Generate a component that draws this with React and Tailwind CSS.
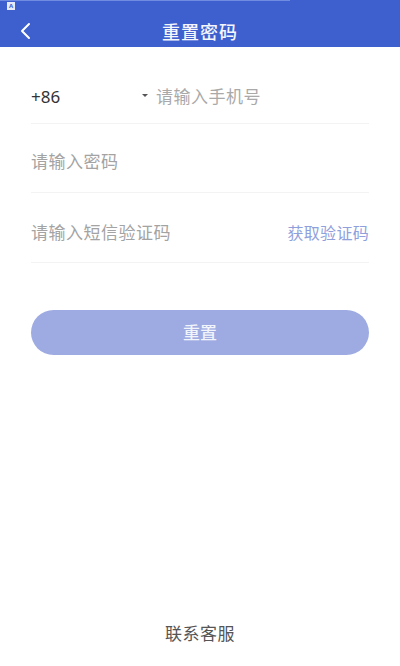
import React from "react";

export default function App() {
  const font = { fontFamily: '"Noto Sans", "Noto Sans CJK SC", sans-serif' };
  return (
    <div className="w-[400px] h-[666px] bg-white flex flex-col relative overflow-hidden" style={font}>
      <div className="h-[47px] bg-[#3e60cf] relative flex items-center justify-center shrink-0">
        <div className="absolute left-0 top-0 w-[290px] h-[1px] bg-[#6f8ce0]" />
        <div className="absolute left-[7px] top-[2px] w-[8px] h-[8px] bg-[#e8ecf8] flex items-center justify-center">
          <span className="text-[6px] leading-none text-[#3e60cf] font-bold">A</span>
        </div>
        <div className="absolute left-[18px] top-[22px]">
          <svg width="16" height="18" viewBox="0 0 16 18" fill="none">
            <path d="M11 2 L4 9 L11 16" stroke="#ffffff" strokeWidth="2" strokeLinecap="round" strokeLinejoin="round" />
          </svg>
        </div>
        <span className="text-[18px] text-[#f4f6fc] font-medium tracking-[1px] mt-[16px] leading-none">重置密码</span>
      </div>

      <div className="px-[31px] flex flex-col mt-[23px]">
        <div className="h-[54px] flex items-center border-b border-[#f3f3f3]">
          <span className="text-[17px] text-[#333] w-[110px]">+86</span>
          <svg width="8" height="6" viewBox="0 0 8 6" className="mr-[7px] mt-[-2px]">
            <path d="M1 1 L7 1 L4 4 Z" fill="#555" />
          </svg>
          <span className="text-[17px] tracking-[0.5px] text-[#a9a9a9]">请输入手机号</span>
        </div>
        <div className="h-[69px] flex items-center border-b border-[#f3f3f3] pt-[8px]">
          <span className="text-[17px] tracking-[0.5px] text-[#a3a3a3]">请输入密码</span>
        </div>
        <div className="h-[70px] flex items-center justify-between border-b border-[#f3f3f3] pt-[10px]">
          <span className="text-[17px] tracking-[0.5px] text-[#a3a3a3]">请输入短信验证码</span>
          <span className="text-[16px] tracking-[0.3px] text-[#8fa0dc]">获取验证码</span>
        </div>
        <div className="mt-[47px] h-[45px] rounded-full bg-[#9dabe2] flex items-center justify-center">
          <span className="text-[17px] text-[#f2f4fb] font-medium">重置</span>
        </div>
      </div>

      <div className="flex-1" />
      <div className="flex justify-center pb-[20px]">
        <span className="text-[17px] tracking-[0.5px] text-[#555]">联系客服</span>
      </div>
    </div>
  );
}
